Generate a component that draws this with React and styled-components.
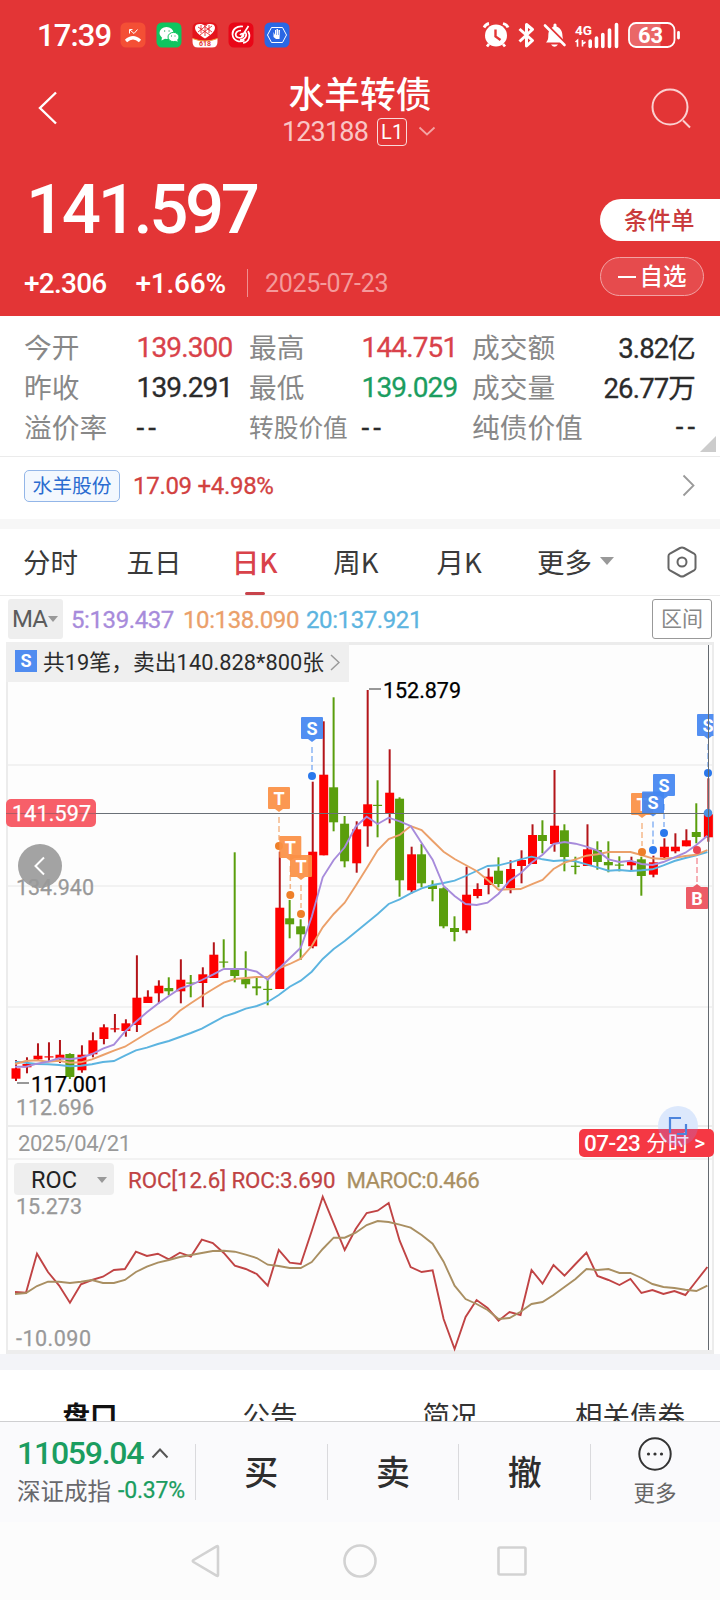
import { useState } from 'react';
import styled, { createGlobalStyle, css } from 'styled-components';

const red = '#e33536';
const upColor = '#d9424a';
const downColor = '#1b9d60';
const candleRed = '#fe0000';
const candleGreen = '#5a9e0d';
const purple = '#a78bdb';
const orange = '#eba06a';
const blue = '#5cb4e0';
const gold = '#a98f62';

const stats = [
  ['今开', '139.300', upColor, '最高', '144.751', upColor, '成交额', '3.82亿'],
  ['昨收', '139.291', '#2b2b2b', '最低', '139.029', downColor, '成交量', '26.77万'],
  ['溢价率', '--', '#2b2b2b', '转股价值', '--', '#2b2b2b', '纯债价值', '--'],
];

const periods = ['分时', '五日', '日K', '周K', '月K'];

// up/down, high, body top, body bottom, low
const candles = [
  [1, 1060, 1068.3, 1078.7, 1081], [1, 1057.3, 1064, 1067.3, 1073.3], [1, 1043.3, 1055.7, 1059.3, 1060],
  [1, 1042.3, 1056.3, 1057.3, 1061], [1, 1040, 1054.7, 1059.3, 1063], [0, 1053.3, 1054, 1077, 1079],
  [1, 1045.3, 1054.7, 1070.3, 1072.7], [1, 1032.3, 1040.3, 1054.3, 1057.3], [1, 1024.3, 1027.3, 1039, 1044.3],
  [1, 1014, 1028.3, 1029.3, 1032.3], [1, 1019.3, 1023.3, 1031, 1036.7], [1, 955.3, 997.7, 1025, 1032],
  [1, 990.3, 996.7, 1003, 1003], [1, 980.3, 985.7, 993.3, 1003.3], [0, 977.3, 988, 991.3, 995.3],
  [1, 959.3, 979.7, 991.3, 1003.3], [0, 975, 982.5, 983.5, 997.3], [1, 967.3, 974.3, 983, 1007.3],
  [1, 942.3, 954.7, 978, 978], [0, 939.3, 961.5, 962.5, 967.7], [0, 852.3, 970, 976, 982.3],
  [0, 951.3, 978.7, 984.3, 988.3], [0, 978, 986.3, 988.3, 995.3], [0, 980, 988.8, 989.8, 1005.3],
  [1, 851.7, 907.7, 989, 989], [0, 900, 918.3, 924.3, 938.3], [0, 919.3, 926.3, 934.3, 960],
  [1, 781.7, 851.7, 946.3, 948.3], [1, 721.3, 774.7, 855.3, 855.3], [0, 697.3, 787.3, 822.3, 831.3],
  [0, 816, 823.7, 861.3, 867.3], [1, 821.3, 829.3, 863.3, 872.7], [1, 690, 804.3, 826.3, 846.7],
  [0, 780.3, 804.8, 805.8, 837.3], [1, 749.3, 792.7, 813.3, 823.3], [0, 797.3, 798.7, 880.3, 896.7],
  [1, 846.7, 854.3, 890.3, 893.3], [0, 844, 854.3, 883.3, 887.3], [0, 880.3, 885.3, 889, 901.3],
  [0, 887.3, 888.3, 926.3, 928.3], [0, 916.3, 928, 932, 941.3], [1, 866.7, 894.7, 930.3, 933.3],
  [1, 883.3, 889, 896, 898.3], [1, 868.3, 876.7, 885, 894.3], [0, 857.3, 870.7, 884, 887.3],
  [1, 860.3, 869, 888.3, 893.3], [1, 850.3, 860, 866, 883.3], [1, 824.3, 835, 864, 864],
  [0, 820.3, 835, 841, 853.3], [1, 770, 825.7, 844, 851.7], [0, 824.3, 830.3, 857, 871.3],
  [0, 856.7, 865.7, 867, 874.3], [1, 824.3, 849.3, 866, 866], [0, 841.3, 850, 862, 869.7],
  [0, 841.3, 862, 865.3, 872.3], [0, 856.3, 864.5, 865.5, 871.3], [1, 856.7, 861.3, 865.3, 870],
  [0, 856.7, 859.3, 876, 895.7], [1, 855.7, 862.3, 874.7, 877.3], [1, 838.3, 846.7, 857.3, 859.3],
  [1, 833.3, 846.7, 851.3, 853.3], [1, 829.3, 840.3, 846.3, 846.3], [0, 803.3, 832, 837, 843.3],
  [1, 778.3, 814.3, 837.3, 841.7],
];

const ma5 = [
  1066.7, 1066.7, 1063.7, 1061.7, 1058.3, 1059.3, 1057.7, 1054, 1048.7, 1044.7, 1031.7, 1021.7, 1012.3, 1003.7, 996, 988.7,
  985, 980, 974.7, 969, 969, 969, 971.7, 979.7, 968.7, 958.3, 947.7, 916.7, 877.3, 860, 847.3, 826.7,
  816.7, 824, 817.7, 821.3, 826, 843, 859.7, 886, 896, 904, 905, 902.7, 893.7, 880.7, 873.3, 862.7,
  854.7, 844, 842, 843.7, 846.7, 850.7, 859.3, 862, 860.7, 864, 865, 862, 857.3, 852.7, 845, 835.7,
];
const ma10 = [
  1064, 1061, 1060.3, 1061.7, 1060.7, 1062.7, 1062.3, 1059.3, 1055, 1050.7, 1046.7, 1040, 1033.3, 1027, 1021, 1010.7,
  1003.3, 996, 989.3, 982.7, 979, 978, 977, 977, 968.3, 964, 958.7, 946, 927.3, 914, 902.7, 885.7,
  868.3, 850.3, 839, 835, 826, 830, 841, 851.7, 859, 865, 871, 880, 889.7, 889.3, 889, 884.3,
  880, 869, 862.7, 859.3, 855.7, 854.3, 852, 852, 852, 855, 858.3, 859, 857.7, 856, 854.7, 850,
];
const ma20 = [
  1061.7, 1062.7, 1064, 1064.3, 1065, 1066.3, 1065.7, 1064.3, 1062, 1061, 1055.7, 1050.3, 1047.7, 1044, 1041, 1037,
  1033, 1028.7, 1022.7, 1016.7, 1013, 1008.7, 1006, 1002, 995, 986.7, 980.7, 971.7, 959, 949, 941, 932,
  923, 914, 904, 899.3, 893.3, 888.3, 885, 883, 880.7, 876, 871, 866, 865.3, 862.7, 859.3, 856.7,
  859.3, 861, 860.3, 861.3, 864.3, 867.3, 870.7, 870, 871, 870.3, 869.3, 865.3, 861, 858, 855.3, 852,
];
const roc = [
  1292, 1292.7, 1253.7, 1272, 1285.3, 1302.7, 1284.3, 1280, 1276.7, 1270, 1269, 1251.7, 1256, 1253.7, 1259.3, 1252.7,
  1256.7, 1239.7, 1243, 1253, 1265.7, 1269, 1274, 1285.7, 1250, 1262.7, 1264, 1231, 1196.7, 1223.3, 1250, 1229,
  1213, 1210.7, 1203, 1240.7, 1267, 1272, 1270.3, 1319, 1349, 1317, 1300, 1308, 1320.7, 1312, 1315, 1270,
  1283.7, 1265, 1275.7, 1264, 1252.7, 1276, 1280, 1285, 1279, 1293, 1290, 1294, 1291, 1295, 1281, 1267,
];
const maroc = [
  1294, 1293, 1286, 1281.7, 1281.7, 1283, 1281.7, 1280, 1283, 1283, 1280, 1272, 1266.7, 1262.7, 1260, 1257,
  1255, 1253, 1251, 1250.7, 1251.7, 1254.7, 1258, 1264.7, 1266, 1268, 1268, 1262, 1249, 1237.7, 1237.7, 1232.7,
  1225, 1221, 1222, 1224.7, 1227.7, 1235, 1243.7, 1261.7, 1285.7, 1299, 1304, 1310, 1319, 1318, 1311.7, 1304,
  1302, 1295, 1287, 1279, 1269, 1270, 1269, 1273, 1273, 1278, 1284, 1287, 1288, 1289.7, 1291, 1285.7,
];

// type, x, box top, dot y
const trades = [
  ['S', 312, 717, 776], ['T', 279, 787, 846], ['T', 290.3, 836, 895], ['T', 301, 855, 914],
  ['T', 642, 793, 852], ['S', 653, 791.5, 850], ['S', 664, 774, 833], ['S', 708, 714, 773], ['B', 697, 887, 850],
];
const tradeColors = { S: ['#4587f2', '#2a78ec'], T: ['#fb9146', '#ee7f29'], B: ['#ec505c', '#ec4450'] };

const xAt = (i) => 16 + i * 10.99;
const toPoints = (ys) => ys.map((y, i) => `${xAt(i) - 1},${y}`).join(' ');

const Trade = ({ type, x, top, dot }) => {
  const [fill, dotFill] = tradeColors[type];
  const below = type === 'B';
  return (
    <g>
      <line x1={x} x2={x} y1={below ? dot + 8 : top + 30} y2={below ? top - 2 : dot - 6} stroke={dotFill} strokeOpacity='.55' strokeWidth='1.5' strokeDasharray='6 3' />
      <circle cx={x} cy={dot} r='4' fill={dotFill} />
      <g opacity='.93'>
        <rect x={x - 11} y={top} width='22' height='22' rx='1' fill={fill} />
        <path d={below ? `M${x - 4} ${top}l4-3 4 3z` : `M${x - 4} ${top + 22}l4 3 4-3z`} fill={fill} />
      </g>
      <MarkText x={x} y={top + 17.5}>{type}</MarkText>
    </g>
  );
};

const StatusIcons = () => (
  <svg width='202' height='28' viewBox='482 20 202 28' fill='none' stroke='#fff'>
    <circle cx='496' cy='34.5' r='11' fill='#fff' stroke='none' />
    <path d='M484 26.5q2-3.5 5-4M503 22.5q4 1 5 4M489 43l-2 2.5M503 43l2 2.5' strokeWidth='2.8' />
    <path d='M495.5 28.5v7l5 3.5' stroke={red} strokeWidth='2.4' />
    <path d='M519.5 28l13 11.5-6 5.5V23.5l6 5-13 12' strokeWidth='3' strokeLinejoin='round' />
    <path d='M546 41.500c4-4 1-8 3.500-12.500q1-2 4-3.500v-2q1.500-2 3 0v2c5 2 6 6 6 10q0 4 2.500 6z' fill='#fff' stroke='none' />
    <path d='M551 43.500h7q-3.500 4.500-7 0' fill='#fff' stroke='none' />
    <path d='M546.500 23.500l20 20' stroke={red} strokeWidth='2.500' />
    <path d='M545 24.500l19.500 19.500' strokeWidth='2.600' strokeLinecap='round' />
    <StatusLabel x='575' y='34' fontSize='13' textLength='17' lengthAdjust='spacingAndGlyphs'>4G</StatusLabel>
    <path d='M575.500 41l2-1.800v6.500M582.500 39v6.500M582.500 43l3-2' strokeWidth='1.600' />
    <path d='M590.200 40v5.500M596.500 37v8.500M602.800 33.500v12M609.500 29v16.500M616.500 23.500v22' strokeWidth='3.600' strokeLinecap='round' />
    <path d='M637 22.500h23.500v23.500h-23.500q-8 0-8-8v-8q0-7.500 8-7.500z' fill='#fff' fillOpacity='.25' stroke='none' />
    <rect x='629' y='22' width='45.500' height='24' rx='7' strokeWidth='1.800' />
    <path d='M678.500 31.500v5.500' strokeWidth='2.800' strokeLinecap='round' />
    <StatusLabel x='638' y='42' fontSize='22' textLength='25'>63</StatusLabel>
  </svg>
);

const AppIcons = () => (
  <svg width='170' height='26' viewBox='120 22 170 26' fill='none' stroke='#fff'>
    <g stroke='none'>
      <rect x='120.500' y='22.500' width='25' height='25' rx='5.500' fill='#f44f35' />
      <rect x='156.500' y='22.500' width='25' height='25' rx='5.500' fill='#0fc45f' />
      <rect x='192.500' y='22.500' width='25' height='25' rx='5.500' fill='#e5141b' />
      <rect x='228.500' y='22.500' width='25' height='25' rx='5.500' fill='#e90617' />
      <rect x='264.500' y='22.500' width='25' height='25' rx='5.500' fill='#2a67e4' />
    </g>
    <path d='M129.500 33.500v-4h3M130 30l4 3.500 3.500-4' strokeWidth='1' />
    <path d='M126 41q7-6.500 14 0' strokeWidth='3.200' />
    <g fill='#fff' stroke='none'>
      <ellipse cx='166.500' cy='33' rx='7' ry='6' />
      <path d='M162 37l-.500 3.500 4-2z' />
      <ellipse cx='173.500' cy='37' rx='5.500' ry='4.600' stroke='#0fc45f' />
      <path d='M175 40l2.500 2-.500-3.500z' />
    </g>
    <path d='M164 31h1.200M168.500 31h1.200M171 36h1M174.500 36h1' stroke='#0a9c48' />
    <path d='M205 38.500c-6-3.500-10-7-10-11 0-4 7-4.500 10-1.500 3-3 10-2.500 10 1.500 0 4-4 7.500-10 11z' fill='#fff' stroke='none' />
    <path d='M198 27l12 8M204 26l8 6M212 26l-12 9M207 25l-9 7M205 27v9M201 25v8M209 25v8' stroke='#e5141b' strokeWidth='.800' />
    <path d='M192.500 38.500q12.500 5 25 0v3.500q0 5.500-5.500 5.500h-14q-5.500 0-5.500-5.500z' fill='#fff' stroke='none' />
    <path d='M192.500 38.500q12.500 5 25 0' stroke='#f3a13c' strokeWidth='1' />
    <TinyLabel x='205' y='46.300'>618</TinyLabel>
    <path d='M243 26.500c-6-1-11 3-10.500 8 .5 6 7 8.500 12 6M248 31c3 5 1 11-5 12M241 30.500c-4 0-6 2.500-5 5.500 1 2 5 2.500 7 .5 2-3-1-4-3-1.500M248.500 26l-7 11M245 32c3 3 0 8-5 8' strokeWidth='1.700' />
    <path d='M271.500 27.500h11l4 7.500-4 7.500h-11l-4-7.500z' strokeWidth='1' />
    <path d='M273.500 32v5l2.500 2h3.500l.5-9h-1.500v5h-.5v-6h-1.500v6h-.5v-5h-1v5z' fill='#fff' stroke='none' />
  </svg>
);

const KChart = () => (
  <Chart height='480' viewBox='8 645 704 480'>
    <path d='M8 765H712M8 886H712M8 1007H712' stroke='#f2f2f2' strokeWidth='2' />
    <defs>
      <clipPath id='plot'><rect x='8' y='645' width='705.5' height='480' /></clipPath>
    </defs>
    <g clipPath='url(#plot)'>
      {candles.map(([up, high, top, bottom, low], i) => {
        const thin = bottom - top < 1.2;
        const x = up ? xAt(i) : xAt(i) - 1.1;
        return (
          <g key={i} fill={up ? candleRed : candleGreen}>
            <rect x={x - 1} y={high} width='2' height={low - high} fill={up ? '#b3151a' : candleGreen} />
            <rect x={x - 4.5} y={top} width='9' height={thin ? 1.2 : bottom - top} />
          </g>
        );
      })}
      <Line points={toPoints(ma20)} $color={blue} />
      <Line points={toPoints(ma10)} $color={orange} />
      <Line points={toPoints(ma5)} $color={purple} />
      {trades.map(([type, x, top, dot]) => <Trade key={x} type={type} x={x} top={top} dot={dot} />)}
      <path d='M8 813.500H712' stroke='#6a7077' strokeWidth='1' />
      <circle cx='708' cy='813' r='4.300' fill='#4a90e2' />
    </g>
    <path d='M369 689H381M17 1083H29' stroke='#777' strokeWidth='1.500' />
    <ChartLabel x='383' y='698' textLength='78' $color='#000'>152.879</ChartLabel>
    <circle cx='40' cy='866' r='22' fill='#a3a3a3' />
    <path d='M44 857.500l-8.500 8.500 8.500 8.500' fill='none' stroke='#fff' strokeWidth='2' />
    <ChartLabel x='16' y='895' textLength='78'>134.940</ChartLabel>
    <ChartLabel x='31' y='1092' textLength='78' $color='#000'>117.001</ChartLabel>
    <ChartLabel x='16' y='1115' textLength='78'>112.696</ChartLabel>
    <rect x='6' y='799' width='90' height='28' rx='5' fill='#f75f69' />
    <path d='M6 813.500H96' stroke='#b05a64' />
    <ChartLabel x='12' y='821' textLength='79' $color='#fff'>141.597</ChartLabel>
  </Chart>
);

const RocChart = () => (
  <Chart height='154' viewBox='8 1196 704 154'>
    <Line points={toPoints(roc)} $color='#c04344' />
    <Line points={toPoints(maroc)} $color={gold} />
    <ChartLabel x='16' y='1214' textLength='66'>15.273</ChartLabel>
    <ChartLabel x='16' y='1346' textLength='75'>-10.090</ChartLabel>
  </Chart>
);

const App = () => {
  const [period, setPeriod] = useState('日K');

  return (
    <Screen>
      <GlobalStyle />
      <Header>
        <StatusBar>
          <Clock>17:39</Clock>
          <AppIcons />
          <Spacer />
          <StatusIcons />
        </StatusBar>
        <TitleBar>
          <svg width='20' height='34' viewBox='0 0 20 34' fill='none' stroke='#fff' strokeWidth='2.400'>
            <path d='M18 1.500L2 17l16 15.500' />
          </svg>
          <TitleBox>
            <h1>水羊转债</h1>
            <CodeRow>
              <Num $size={27} $gap={-0.8}>123188</Num>
              <Level>L1</Level>
              <svg width='18' height='11' viewBox='0 0 18 11' fill='none' stroke='#f3a4a4' strokeWidth='1.800'>
                <path d='M1.500 1.500L9 8.500l7.500-7' />
              </svg>
            </CodeRow>
          </TitleBox>
          <svg width='42' height='42' viewBox='0 0 42 42' fill='none' stroke='#fbd0d0' strokeWidth='2'>
            <circle cx='20' cy='20' r='17.500' />
            <path d='M33 33.500l7 7' />
          </svg>
        </TitleBar>
        <PriceArea>
          <div>
            <Price>141.597</Price>
            <ChangeRow>
              <Num $size={28} $gap={-0.75}>+2.306</Num>
              <Num $size={28} $gap={-0.2}>+1.66%</Num>
              <i />
              <Num as='time' $size={25} $gap={-0.3}>2025-07-23</Num>
            </ChangeRow>
          </div>
          <HeaderButtons>
            <OrderButton>条件单</OrderButton>
            <WatchButton>
              <i />
              自选
            </WatchButton>
          </HeaderButtons>
        </PriceArea>
      </Header>

      <StatsGrid>
        {stats.map(([l1, v1, c1, l2, v2, c2, l3, v3]) => (
          <StatsRow key={l1}>
            <StatLabel>{l1}</StatLabel>
            <StatValue $color={c1} $dash={v1 === '--'}>{v1}</StatValue>
            <StatLabel $small={l2.length > 3}>{l2}</StatLabel>
            <StatValue $color={c2} $dash={v2 === '--'}>{v2}</StatValue>
            <StatLabel>{l3}</StatLabel>
            <StatValue $color='#2b2b2b' $dash={v3 === '--'} $right>{v3}</StatValue>
          </StatsRow>
        ))}
        <Corner />
      </StatsGrid>

      <StockRow>
        <StockTag>水羊股份</StockTag>
        <Num $size={24} $gap={-0.3}>17.09 +4.98%</Num>
        <Spacer />
        <svg width='13' height='23' viewBox='0 0 13 23' fill='none' stroke='#9a9a9a' strokeWidth='1.800'>
          <path d='M1.500 1.500l10 10-10 10' />
        </svg>
      </StockRow>

      <Periods>
        {periods.map((name) => (
          <Period key={name} $active={name === period} onClick={() => setPeriod(name)}>{name}</Period>
        ))}
        <MorePeriods>
          更多
          <Arrow $size={7} />
        </MorePeriods>
        <svg width='30' height='32' viewBox='0 0 30 32' fill='none' stroke='#666' strokeWidth='2'>
          <path d='M13 2q2-1 4 0l10 5.500q1.500 1 1.500 2.500v12q0 1.500-1.500 2.500l-10 5.500q-2 1-4 0l-10-5.500q-1.500-1-1.500-2.500v-12q0-1.500 1.500-2.500z' />
          <circle cx='15' cy='16' r='4.500' />
        </svg>
      </Periods>

      <MaRow>
        <MaSelect>
          MA
          <Arrow $size={5} />
        </MaSelect>
        <MaValue $color={purple} $width={112}>5:139.437</MaValue>
        <MaValue $color={orange} $width={123}>10:138.090</MaValue>
        <MaValue $color={blue}>20:137.921</MaValue>
        <Spacer />
        <RangeButton>区间</RangeButton>
      </MaRow>

      <Panel>
        <KChart />
        <TradeTag>
          <b>S</b>
          <span>共19笔，卖出140.828*800张</span>
          <svg width='10' height='17' viewBox='0 0 10 17' fill='none' stroke='#999' strokeWidth='1.500'>
            <path d='M1 1l8 7.500-8 7.500' />
          </svg>
        </TradeTag>
        <DateBar>
          <Num $size={22} $gap={-0.45} $light>2025/04/21</Num>
          <DateBadge>
            <Num $size={22.5} $gap={-0.5}>07-23</Num>
            <span>分时</span>
            <Num $size={21}>&gt;</Num>
          </DateBadge>
        </DateBar>
        <RocHeader>
          <RocSelect>
            ROC
            <Arrow $size={5} />
          </RocSelect>
          <RocValue $color='#c04344' $gap={-0.1}>ROC[12.6] ROC:3.690</RocValue>
          <RocValue $color={gold} $gap={-0.6}>MAROC:0.466</RocValue>
        </RocHeader>
        <RocChart />
        <Crosshair />
        <FullscreenButton>
          <svg width='20' height='20' viewBox='0 0 20 20' fill='none' stroke='#4d84dc' strokeWidth='2.200'>
            <path d='M2 17V2h11M18 8v10H9' />
          </svg>
        </FullscreenButton>
      </Panel>

      <InfoTabs>
        <InfoTab $active>盘口</InfoTab>
        <InfoTab>公告</InfoTab>
        <InfoTab>简况</InfoTab>
        <InfoTab>相关债券</InfoTab>
      </InfoTabs>

      <BottomBar>
        <IndexBox>
          <IndexTop>
            <Num $size={32} $gap={-1.25}>11059.04</Num>
            <svg width='18' height='11' viewBox='0 0 18 11' fill='none' stroke='#555' strokeWidth='2'>
              <path d='M1.500 9.500L9 1.500l7.500 8' />
            </svg>
          </IndexTop>
          <IndexName>
            深证成指
            <Num $size={23} $gap={-0.2}>-0.37%</Num>
          </IndexName>
        </IndexBox>
        <Action>买</Action>
        <Action>卖</Action>
        <Action>撤</Action>
        <MoreAction>
          <svg width='34' height='34' viewBox='0 0 34 34' fill='#333'>
            <circle cx='17' cy='17' r='15.700' fill='none' stroke='#333' strokeWidth='2' />
            <circle cx='10.500' cy='17' r='1.600' />
            <circle cx='17' cy='17' r='1.600' />
            <circle cx='23.500' cy='17' r='1.600' />
          </svg>
          更多
        </MoreAction>
      </BottomBar>

      <NavBar>
        <svg width='30' height='34' viewBox='0 0 30 34'>
          <path d='M27 3v28q0 1.500-1.500.700L2.500 18q-1.500-1 0-2L25.500 2.300Q27 1.500 27 3z' />
        </svg>
        <svg width='34' height='34' viewBox='0 0 34 34'>
          <circle cx='17' cy='17' r='15.500' />
        </svg>
        <svg width='30' height='30' viewBox='0 0 30 30'>
          <rect x='1.500' y='1.500' width='27' height='27' rx='1.500' />
        </svg>
      </NavBar>
    </Screen>
  );
};

const GlobalStyle = createGlobalStyle`
  * {
    box-sizing: border-box;
  }
  body {
    margin: 0;
    background: #fff;
    font-family: Roboto, 'Noto Sans CJK SC', sans-serif;
  }
  h1 {
    margin: 0;
  }
  svg {
    display: block;
    flex-shrink: 0;
  }
`;

const cjk = css`
  font-family: 'Noto Sans CJK SC', sans-serif;
`;

const Screen = styled.div`
  width: 720px;
  height: 1600px;
  overflow: hidden;
  display: flex;
  flex-direction: column;
  background: #fff;
`;

const Spacer = styled.div`
  flex: 1;
`;

const Num = styled.span`
  font-family: Roboto, sans-serif;
  font-size: ${({ $size }) => $size}px;
  letter-spacing: ${({ $gap }) => $gap || 0}px;
  font-weight: ${({ $light }) => ($light ? 400 : 500)};
  white-space: nowrap;
`;

const Arrow = styled.i`
  border: ${({ $size }) => $size}px solid transparent;
  border-top: ${({ $size }) => $size + 1}px solid #999;
  border-bottom: 0;
`;

const Header = styled.header`
  height: 316px;
  background: ${red};
  color: #fff;
`;

const StatusBar = styled.div`
  display: flex;
  align-items: center;
  height: 70px;
  padding: 0 36px 0 37px;
`;

const Clock = styled.div`
  width: 83px;
  font-size: 31px;
  font-weight: 500;
  letter-spacing: -0.9px;
`;

const StatusLabel = styled.text`
  font-family: Roboto, sans-serif;
  font-weight: 700;
  fill: #fff;
  stroke: none;
`;

const TinyLabel = styled.text`
  font: 700 7px Roboto, sans-serif;
  text-anchor: middle;
  fill: ${red};
  stroke: none;
`;

const TitleBar = styled.div`
  display: flex;
  justify-content: space-between;
  align-items: center;
  height: 76px;
  padding: 0 28px 0 38px;
`;

const TitleBox = styled.div`
  display: flex;
  flex-direction: column;
  align-items: center;
  h1 {
    ${cjk}
    padding-left: 12px;
    font-size: 35.8px;
    font-weight: 500;
    line-height: 44px;
  }
`;

const CodeRow = styled.div`
  display: flex;
  align-items: center;
  height: 30px;
  margin-top: 3px;
  padding-left: 10px;
  ${Num} {
    color: #f9c5c5;
    font-weight: 400;
    line-height: 30px;
  }
  svg {
    margin-left: 11px;
  }
`;

const Level = styled.div`
  width: 30px;
  height: 28px;
  margin-left: 9px;
  border: 1.5px solid #f9dada;
  border-radius: 4px;
  font-size: 20px;
  line-height: 26px;
  text-align: center;
`;

const PriceArea = styled.div`
  display: flex;
  justify-content: space-between;
  height: 170px;
`;

const Price = styled.div`
  padding: 26px 0 0 26px;
  font-size: 69px;
  line-height: 76px;
  font-weight: 500;
  letter-spacing: -3.4px;
`;

const ChangeRow = styled.div`
  display: flex;
  align-items: center;
  height: 34px;
  margin-top: 18px;
  padding-left: 24px;
  ${Num} + ${Num} {
    margin-left: 29px;
  }
  i {
    width: 1px;
    height: 28px;
    margin: 0 17px 0 21px;
    background: #f08f90;
  }
  time {
    color: #f49a9b;
    font-weight: 400;
  }
`;

const HeaderButtons = styled.div`
  width: 120px;
  padding-top: 53px;
  ${cjk}
  font-size: 23.5px;
  font-weight: 500;
`;

const OrderButton = styled.div`
  height: 42px;
  padding-left: 24px;
  border-radius: 21px 0 0 21px;
  background: #fff;
  color: #c93a3c;
  line-height: 40px;
`;

const WatchButton = styled.div`
  display: flex;
  align-items: center;
  justify-content: center;
  gap: 4px;
  width: 104px;
  height: 39px;
  margin-top: 16px;
  border: 1px solid #f2a2a3;
  border-radius: 20px;
  background: #e64b4d;
  line-height: 35px;
  padding-bottom: 2px;
  i {
    width: 18px;
    height: 2px;
    margin-top: 2px;
    background: #fff;
  }
`;

const StatsGrid = styled.section`
  position: relative;
  height: 141px;
  padding: 11px 24px 0;
  border-bottom: 1px solid #ebebeb;
`;

const StatsRow = styled.div`
  display: grid;
  grid-template-columns: 113px 112px 113px 110px 112px 1fr;
  align-items: center;
  height: 40.3px;
`;

const StatLabel = styled.span`
  ${cjk}
  margin-top: -3px;
  font-size: ${({ $small }) => ($small ? 24.7 : 27.7)}px;
  color: #888;
  white-space: nowrap;
`;

const StatValue = styled.span`
  font-family: Roboto, 'Noto Sans CJK SC', sans-serif;
  margin-top: ${({ $right }) => ($right ? -3 : 0)}px;
  margin-left: -0.5px;
  font-size: ${({ $right }) => ($right ? 27.5 : 28)}px;
  letter-spacing: ${({ $dash }) => ($dash ? 4 : -0.85)}px;
  margin-right: ${({ $dash }) => ($dash ? -3 : 1)}px;
  color: ${({ $color }) => $color};
  text-align: ${({ $right }) => ($right ? 'right' : 'left')};
  white-space: nowrap;
  -webkit-text-stroke: 0.3px currentColor;
`;

const Corner = styled.i`
  position: absolute;
  right: 4px;
  bottom: 4px;
  border: 8px solid #ccc;
  border-top-color: transparent;
  border-left-color: transparent;
`;

const StockRow = styled.section`
  display: flex;
  align-items: center;
  height: 72px;
  padding: 0 25px 5px 24px;
  border-bottom: 10px solid #f7f7f7;
  color: #d2413f;
  ${Num} {
    font-weight: 400;
    -webkit-text-stroke: 0.3px currentColor;
  }
`;

const StockTag = styled.div`
  width: 96px;
  height: 32px;
  margin-right: 13px;
  border: 1px solid #93b6e8;
  border-radius: 5px;
  background: #f3f8fe;
  color: #2b6cd0;
  ${cjk}
  font-size: 19.8px;
  line-height: 28px;
  text-align: center;
`;

const Periods = styled.nav`
  display: flex;
  align-items: center;
  height: 67px;
  padding: 0 23px 0 23px;
  border-bottom: 1px solid #ebebeb;
  ${cjk}
  font-size: 27.5px;
  color: #3a3a3a;
  svg {
    margin-left: auto;
  }
`;

const Period = styled.div`
  position: relative;
  width: 103.4px;
  margin-top: -2px;
  ${({ $active }) =>
    $active &&
    css`
      color: ${upColor};
      font-weight: 500;
      padding-left: 2px;
      &::after {
        content: '';
        position: absolute;
        left: 15px;
        bottom: -14px;
        width: 20px;
        height: 3px;
        border-radius: 2px;
        background: #c8434b;
      }
    `}
`;

const MorePeriods = styled.div`
  display: flex;
  align-items: center;
  gap: 8px;
  margin: -2px 0 0 -3px;
`;

const MaRow = styled.div`
  display: flex;
  align-items: center;
  height: 46px;
  padding: 0 8px;
`;

const MaSelect = styled.div`
  display: flex;
  align-items: center;
  gap: 1px;
  width: 55px;
  height: 40px;
  margin-right: 8px;
  padding-left: 4px;
  border-radius: 3px;
  background: #eee;
  color: #5c5c5c;
  font-size: 24px;
  letter-spacing: -0.8px;
`;

const MaValue = styled.span`
  width: ${({ $width }) => ($width ? `${$width}px` : 'auto')};
  margin-top: 2px;
  font-size: 24px;
  letter-spacing: -0.4px;
  color: ${({ $color }) => $color};
  white-space: nowrap;
  -webkit-text-stroke: 0.3px currentColor;
`;

const RangeButton = styled.div`
  width: 60px;
  height: 40px;
  border: 1px solid #999;
  border-radius: 3px;
  ${cjk}
  font-size: 21px;
  line-height: 35px;
  text-align: center;
  color: #888;
`;

const Panel = styled.section`
  position: relative;
  height: 712px;
  margin: 0 6px;
  border: 2px solid #ececec;
  border-top-width: 3px;
  border-bottom: 4px solid #ededed;
  background: #fdfdfd;
`;

const Chart = styled.svg`
  width: 704px;
  overflow: visible;
`;

const Line = styled.polyline`
  fill: none;
  stroke: ${({ $color }) => $color};
  stroke-width: 1.9;
`;

const ChartLabel = styled.text`
  font-family: Roboto, sans-serif;
  font-size: 21.5px;
  fill: ${({ $color }) => $color || '#999'};
  stroke: ${({ $color }) => $color || '#999'};
  stroke-width: 0.25px;
`;

const MarkText = styled.text`
  font: 700 18px Roboto, sans-serif;
  text-anchor: middle;
  fill: #fff;
`;

const TradeTag = styled.div`
  position: absolute;
  top: -3px;
  left: -2px;
  display: flex;
  align-items: center;
  width: 343px;
  height: 40px;
  padding-left: 9px;
  background: #efefef;
  color: #2b2b2b;
  b {
    width: 22px;
    height: 22px;
    margin: -2px 6px 0 0;
    background: #508cf0;
    color: #fff;
    font-size: 18px;
    line-height: 22px;
    text-align: center;
  }
  span {
    width: 287px;
    margin-top: -4px;
    font-size: 21.8px;
    white-space: nowrap;
    letter-spacing: 0.02px;
  }
`;

const DateBar = styled.div`
  display: flex;
  align-items: center;
  justify-content: space-between;
  height: 35px;
  border-top: 2px solid #ececec;
  border-bottom: 2px solid #f2f2f2;
  > ${Num} {
    padding: 2px 0 0 10px;
    color: #999;
  }
`;

const DateBadge = styled.div`
  position: relative;
  z-index: 1;
  display: flex;
  align-items: center;
  width: 135px;
  height: 28px;
  margin-right: -2px;
  padding-left: 5px;
  border-radius: 5px;
  background: #f53844;
  color: #fff;
  span:nth-child(2) {
    ${cjk}
    margin: 0 5px 3px 6px;
    font-size: 21.5px;
  }
`;

const RocHeader = styled.div`
  display: flex;
  align-items: center;
  height: 36px;
  padding-left: 6px;
`;

const RocSelect = styled.div`
  display: flex;
  align-items: center;
  justify-content: space-between;
  width: 100px;
  height: 32px;
  margin: 2px 14px 0 0;
  padding: 1px 7px 0 17px;
  border-radius: 4px;
  background: #eee;
  color: #222;
  font-size: 23.5px;
`;

const RocValue = styled.span`
  margin: 3px 11px 0 0;
  font-size: 22.3px;
  letter-spacing: ${({ $gap }) => $gap}px;
  color: ${({ $color }) => $color};
  -webkit-text-stroke: 0.25px currentColor;
`;

const Crosshair = styled.i`
  position: absolute;
  top: 0;
  bottom: 0;
  left: 700px;
  width: 1px;
  background: #646a70;
`;

const FullscreenButton = styled.div`
  position: absolute;
  z-index: 2;
  top: 461px;
  left: 650px;
  display: flex;
  align-items: center;
  justify-content: center;
  width: 40px;
  height: 40px;
  border-radius: 50%;
  background: linear-gradient(#dce8fc 0 23px, rgba(160, 130, 240, 0.25) 23px);
`;

const InfoTabs = styled.nav`
  display: flex;
  height: 67px;
  padding-top: 24px;
  border-top: 16px solid #f3f4f8;
  overflow: hidden;
`;

const InfoTab = styled.div`
  width: 180px;
  ${cjk}
  font-size: 27.5px;
  font-weight: ${({ $active }) => ($active ? 700 : 400)};
  line-height: 40px;
  text-align: center;
  color: ${({ $active }) => ($active ? '#111' : '#333')};
`;

const BottomBar = styled.footer`
  display: flex;
  align-items: center;
  height: 101px;
  border-top: 1px solid #cfcfd1;
  background: #fafafc;
`;

const IndexBox = styled.div`
  width: 195px;
  margin-top: -2px;
  padding-left: 17px;
  color: ${downColor};
`;

const IndexTop = styled.div`
  display: flex;
  align-items: center;
  gap: 8px;
  height: 38px;
`;

const IndexName = styled.div`
  display: flex;
  align-items: center;
  gap: 7px;
  height: 36px;
  ${cjk}
  font-size: 23.5px;
  color: #68686c;
  white-space: nowrap;
  ${Num} {
    color: ${downColor};
    font-weight: 400;
    -webkit-text-stroke: 0.25px currentColor;
  }
`;

const Action = styled.div`
  width: 131.7px;
  height: 56px;
  border-left: 1px solid #dadadd;
  ${cjk}
  font-size: 34px;
  font-weight: 500;
  line-height: 54px;
  text-align: center;
  color: #2e2e2e;
`;

const MoreAction = styled.div`
  display: flex;
  flex-direction: column;
  align-items: center;
  flex: 1;
  height: 56px;
  padding-right: 1px;
  border-left: 1px solid #dadadd;
  ${cjk}
  font-size: 21.5px;
  line-height: 31px;
  color: #666;
  svg {
    margin: -7px 0 5px;
  }
`;

const NavBar = styled.div`
  display: flex;
  align-items: center;
  flex: 1;
  padding-left: 191px;
  background: #fcfcfc;
  svg {
    fill: none;
    stroke: #d2d2d2;
    stroke-width: 2.6px;
  }
  svg + svg {
    margin-left: 122px;
  }
  svg + svg + svg {
    margin-left: 120px;
  }
`;

export default App;
